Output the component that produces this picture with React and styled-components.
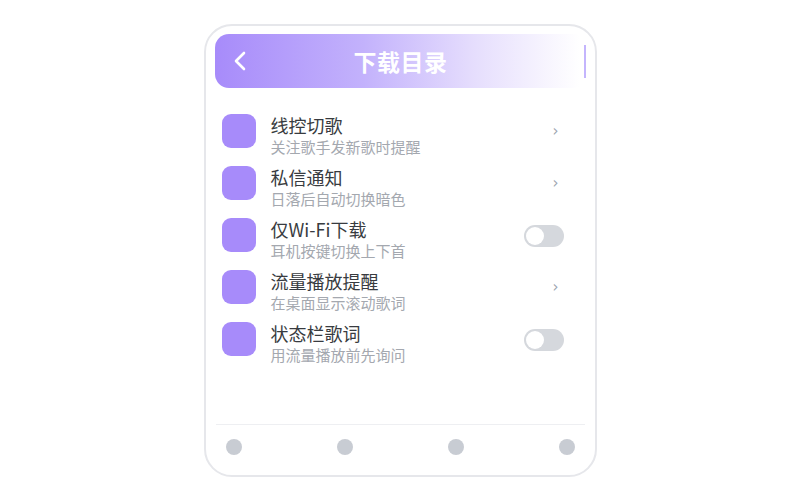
import React from "react"
import styled, { createGlobalStyle } from "styled-components"

const GlobalStyle = createGlobalStyle`
  body {
    margin: 0;
    background: #ffffff;
    font-family: "Noto Sans CJK SC", "Noto Sans", sans-serif;
  }
`

const Page = styled.div`
  display: flex;
  justify-content: center;
  padding-top: 24px;
`

const Phone = styled.div`
  box-sizing: border-box;
  width: 393px;
  height: 453px;
  border: 2px solid #e6e7eb;
  border-radius: 28px;
  padding: 8px 8px 10px 9px;
  display: flex;
  flex-direction: column;
  background: #fff;
`

const Header = styled.div`
  height: 54px;
  border-radius: 14px;
  background: linear-gradient(90deg, #a78bfa 0%, #c3b2fc 40%, #e6defd 70%, #ffffff 98%);
  display: grid;
  grid-template-columns: 44px 1fr 44px;
  align-items: center;
`

const BackButton = styled.div`
  display: flex;
  align-items: center;
  justify-content: center;
  padding-left: 6px;
`

const Title = styled.div`
  text-align: center;
  color: #fff;
  font-size: 23px;
  font-weight: 700;
  letter-spacing: 0.5px;
`

const EdgeLine = styled.div`
  justify-self: end;
  margin-right: 1px;
  width: 2px;
  height: 33px;
  background: #c4b5fd;
`

const List = styled.div`
  flex: 1;
  padding: 26px 23px 0 7px;
  display: flex;
  flex-direction: column;
`

const Row = styled.div`
  height: 52px;
  display: flex;
  align-items: flex-start;
`

const Icon = styled.div`
  width: 34px;
  height: 34px;
  border-radius: 9px;
  background: #a78bfa;
  flex-shrink: 0;
`

const Texts = styled.div`
  flex: 1;
  margin-left: 15px;
  display: flex;
  flex-direction: column;
`

const RowTitle = styled.div`
  font-size: 18px;
  line-height: 23px;
  color: #383b40;
`

const RowSub = styled.div`
  font-size: 15px;
  line-height: 19px;
  color: #a4a8af;
`

const Trailing = styled.div`
  width: 40px;
  height: 34px;
  display: flex;
  align-items: center;
  justify-content: flex-end;
`

const Chevron = styled.span`
  margin-right: 5px;
  font-size: 15px;
  color: #9ca3af;
  font-family: "DejaVu Sans", sans-serif;
`

const Toggle = styled.div`
  box-sizing: border-box;
  width: 40px;
  height: 22px;
  margin-top: 1px;
  border-radius: 11px;
  background: #d5d8dd;
  padding: 2px;
  display: flex;
  align-items: center;
  justify-content: ${(p) => (p.on ? "flex-end" : "flex-start")};
`

const Knob = styled.div`
  width: 18px;
  height: 18px;
  border-radius: 50%;
  background: #fff;
`

const Footer = styled.div`
  margin: 0 2px 0 1px;
  border-top: 1px solid #eeeff2;
  padding: 14px 10px 10px;
  display: flex;
  justify-content: space-between;
`

const Dot = styled.div`
  width: 16px;
  height: 16px;
  border-radius: 50%;
  background: #c8ccd3;
`

const items = [
  { title: "线控切歌", sub: "关注歌手发新歌时提醒", type: "arrow" },
  { title: "私信通知", sub: "日落后自动切换暗色", type: "arrow" },
  { title: "仅Wi-Fi下载", sub: "耳机按键切换上下首", type: "toggle" },
  { title: "流量播放提醒", sub: "在桌面显示滚动歌词", type: "arrow" },
  { title: "状态栏歌词", sub: "用流量播放前先询问", type: "toggle" },
]

export default function App() {
  return (
    <Page>
      <GlobalStyle />
      <Phone>
        <Header>
          <BackButton>
            <svg width="14" height="20" viewBox="0 0 14 20">
              <polyline points="11,2 3,10 11,18" fill="none" stroke="#fff" strokeWidth="2.6" strokeLinecap="round" strokeLinejoin="round" />
            </svg>
          </BackButton>
          <Title>下载目录</Title>
          <EdgeLine />
        </Header>
        <List>
          {items.map((it) => (
            <Row key={it.title}>
              <Icon />
              <Texts>
                <RowTitle>{it.title}</RowTitle>
                <RowSub>{it.sub}</RowSub>
              </Texts>
              <Trailing>
                {it.type === "arrow" ? (
                  <Chevron>›</Chevron>
                ) : (
                  <Toggle>
                    <Knob />
                  </Toggle>
                )}
              </Trailing>
            </Row>
          ))}
        </List>
        <Footer>
          <Dot />
          <Dot />
          <Dot />
          <Dot />
        </Footer>
      </Phone>
    </Page>
  )
}
